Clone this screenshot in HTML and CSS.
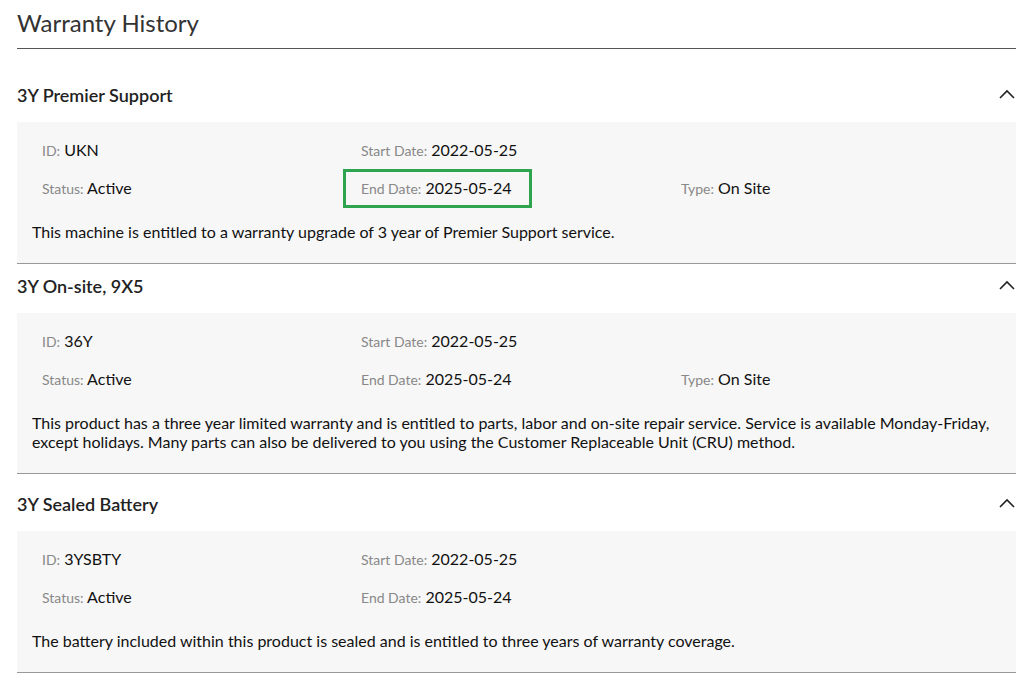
FILE: index.html
```html
<!DOCTYPE html>
<html lang="en">
<head>
    <meta charset="UTF-8">
    <meta name="viewport" content="width=device-width, initial-scale=1.0">
    <title>Warranty History</title>
    <link rel="stylesheet" href="styles.css">
</head>
<body>
    <div class="warranty-container">
        <h2 class="page-title">Warranty History</h2>

        <div class="warranty-item">
            <div class="item-header">
                <h3>3Y Premier Support</h3>
                <svg class="chevron" width="16" height="10" viewBox="0 0 16 10"><path d="M1 9 L8 2 L15 9" fill="none" stroke="#222" stroke-width="1.6"/></svg>
            </div>
            <div class="item-body">
                <div class="info-grid">
                    <div class="info"><span class="label">ID:</span> UKN</div>
                    <div class="info"><span class="label">Start Date:</span> 2022-05-25</div>
                    <div class="info"></div>
                    <div class="info"><span class="label">Status:</span> Active</div>
                    <div class="info highlight"><span class="label">End Date:</span> 2025-05-24</div>
                    <div class="info"><span class="label">Type:</span> On Site</div>
                </div>
                <p class="description">This machine is entitled to a warranty upgrade of 3 year of Premier Support service.</p>
            </div>
        </div>

        <div class="warranty-item">
            <div class="item-header">
                <h3>3Y On-site, 9X5</h3>
                <svg class="chevron" width="16" height="10" viewBox="0 0 16 10"><path d="M1 9 L8 2 L15 9" fill="none" stroke="#222" stroke-width="1.6"/></svg>
            </div>
            <div class="item-body">
                <div class="info-grid">
                    <div class="info"><span class="label">ID:</span> 36Y</div>
                    <div class="info"><span class="label">Start Date:</span> 2022-05-25</div>
                    <div class="info"></div>
                    <div class="info"><span class="label">Status:</span> Active</div>
                    <div class="info"><span class="label">End Date:</span> 2025-05-24</div>
                    <div class="info"><span class="label">Type:</span> On Site</div>
                </div>
                <p class="description">This product has a three year limited warranty and is entitled to parts, labor and on-site repair service. Service is available Monday-Friday, except holidays. Many parts can also be delivered to you using the Customer Replaceable Unit (CRU) method.</p>
            </div>
        </div>

        <div class="warranty-item">
            <div class="item-header item-header-tall">
                <h3>3Y Sealed Battery</h3>
                <svg class="chevron" width="16" height="10" viewBox="0 0 16 10"><path d="M1 9 L8 2 L15 9" fill="none" stroke="#222" stroke-width="1.6"/></svg>
            </div>
            <div class="item-body">
                <div class="info-grid">
                    <div class="info"><span class="label">ID:</span> 3YSBTY</div>
                    <div class="info"><span class="label">Start Date:</span> 2022-05-25</div>
                    <div class="info"></div>
                    <div class="info"><span class="label">Status:</span> Active</div>
                    <div class="info"><span class="label">End Date:</span> 2025-05-24</div>
                    <div class="info"></div>
                </div>
                <p class="description">The battery included within this product is sealed and is entitled to three years of warranty coverage.</p>
            </div>
        </div>
    </div>
</body>
</html>
```

FILE: styles.css
```css
body {
    font-family: Lato, "Open Sans", sans-serif;
    background-color: #fff;
    color: #111;
    margin: 0;
    padding: 0;
}
.warranty-container {
    padding: 0 20px 0 17px;
}
.page-title {
    margin: 0;
    padding: 8px 0 10px;
    font-size: 24px;
    font-weight: 400;
    line-height: 30px;
    color: #333;
    border-bottom: 1px solid #555;
}
.warranty-item {
    border-bottom: 1px solid #999;
}
.warranty-item:first-of-type {
    margin-top: 24px;
}
.item-header {
    display: flex;
    justify-content: space-between;
    align-items: center;
    height: 49px;
}
.item-header-tall {
    height: 57px;
    padding-top: 8px;
    box-sizing: border-box;
}
.item-header h3 {
    margin: 0 0 6px;
    font-size: 18px;
    font-weight: 600;
    color: #222;
}
.chevron {
    margin-right: 1px;
    margin-bottom: 8px;
}
.item-body {
    background-color: #f7f7f7;
    padding: 9px 15px 22px;
}
.info-grid {
    display: grid;
    grid-template-columns: 319px 320px 1fr;
    padding-left: 10px;
}
.info {
    height: 38px;
    line-height: 38px;
    font-size: 16px;
    color: #111;
    position: relative;
}
.label {
    font-size: 14px;
    color: #888;
}
.highlight::after {
    content: "";
    position: absolute;
    left: -18px;
    top: 0;
    width: 183px;
    height: 33px;
    border: 3px solid #2ea44f;
}
.description {
    margin: 15px 0 0;
    font-size: 16px;
    line-height: 19px;
    color: #111;
}
```
